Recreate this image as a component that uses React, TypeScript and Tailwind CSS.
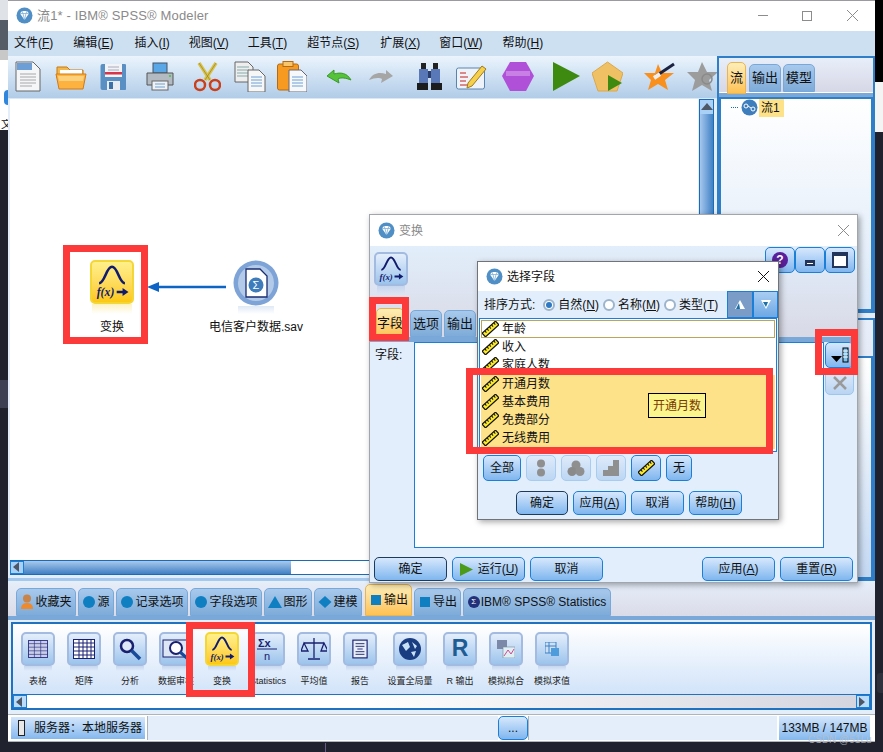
import type { ReactNode } from "react";

function Logo({ size = 17 }: { size?: number }) {
  return (
    <svg width={size} height={size} viewBox="0 0 17 17" className="shrink-0">
      <circle cx="8.5" cy="8.5" r="8" fill="#4f8fc6" />
      <path d="M4 6.5 6 4h5l2 2.5L8.5 13z" fill="#fff" />
      <path d="M4 6.5h9M6 4l1 2.5 1.500 6.500L10 6.500 11 4" stroke="#7fb0d8" strokeWidth=".8" fill="none" />
    </svg>
  );
}

function Fx({ size = 34 }: { size?: number }) {
  return (
    <svg width={size} height={size} viewBox="0 0 34 34">
      <path d="M6 18c5 0 6-14 11-14s6 14 11 14" fill="none" stroke="#101a6e" strokeWidth="2.200" />
      <text x="4" y="29" fontSize="10" fontWeight="700" fontStyle="italic" fontFamily="Liberation Serif, serif" fill="#101a6e">
        f(x)
      </text>
      <path d="M21 25.500h7" stroke="#101a6e" strokeWidth="2" />
      <path d="M26 22l5 3.500-5 3.500z" fill="#101a6e" />
    </svg>
  );
}

function Ruler() {
  return (
    <svg width="17" height="16" viewBox="0 0 17 16" className="shrink-0">
      <g transform="rotate(-42 8.500 8)">
        <rect x="-0.500" y="5.500" width="18" height="5" fill="#fbe92a" stroke="#111" strokeWidth="1.200" />
        <path d="M3 6v2M6 6v2M9 6v2M12 6v2M15 6v2" stroke="#111" />
      </g>
    </svg>
  );
}

function Radio({ on }: { on?: boolean }) {
  return (
    <span className="flex h-[12px] w-[12px] shrink-0 items-center justify-center rounded-full border-2 border-[#9db4cc] bg-white">
      {on && <span className="h-[6px] w-[6px] rounded-full bg-[#2d79c4]" />}
    </span>
  );
}

function Btn({ className, children, dark }: { className: string; children: ReactNode; dark?: boolean }) {
  return (
    <div
      className={`flex items-center justify-center rounded-[5px] border bg-linear-to-b from-[#d6e8fc] to-[#7fb6ee] text-[12px] text-[#111] ${
        dark ? "border-[#1d3b5c]" : "border-[#1b7fd8]"
      } ${className}`}
    >
      {children}
    </div>
  );
}

function Tab({ className, active, children }: { className: string; active?: boolean; children: ReactNode }) {
  return (
    <div
      className={`flex items-center justify-center rounded-t-[5px] border text-[#111] ${
        active
          ? "border-[#e8b552] bg-linear-to-b from-[#fdeeb8] to-[#fdc252]"
          : "border-[#78a8d8] bg-linear-to-b from-[#a8c9ec] to-[#7eabd9]"
      } ${className}`}
    >
      {children}
    </div>
  );
}

function Dot({ kind = "circle" }: { kind?: "circle" | "tri" | "pent" | "square" }) {
  return (
    <svg width="14" height="14" viewBox="0 0 14 14" className="shrink-0">
      {kind === "circle" && <circle cx="7" cy="7" r="6" fill="#0f7fc2" />}
      {kind === "tri" && <path d="M7 1l7 12H0z" fill="#0f7fc2" />}
      {kind === "pent" && <path d="M7 1l6.500 6L7 13 .5 7z" fill="#0f7fc2" />}
      {kind === "square" && <rect x="2" y="2" width="10" height="10" fill="#0f7fc2" />}
    </svg>
  );
}

const tools: { ml: string; w: number; node: ReactNode }[] = [
  {
    ml: "ml-[7px]",
    w: 26,
    node: (
      <>
        <path d="M1 1h17l7 7v22H1z" fill="#f4f6f8" stroke="#666" />
        <rect x="2" y="2" width="15" height="7" fill="#6d9fd6" />
        <path d="M5 13h16M5 16h16M5 19h16M5 22h16M5 25h12" stroke="#a8a8a8" />
      </>
    ),
  },
  {
    ml: "ml-[14px]",
    w: 32,
    node: (
      <>
        <path d="M2 6h10l3 3h13v8H2z" fill="#f4b74a" stroke="#c67a18" />
        <path d="M5 9h22v6H5z" fill="#fff" />
        <path d="M1 13h30l-3 15H4z" fill="#fdb23f" stroke="#d07a18" />
        <path d="M3 15h26l-1 5H4z" fill="#fdd07c" />
      </>
    ),
  },
  {
    ml: "ml-[13px]",
    w: 26,
    node: (
      <>
        <rect x="0.500" y="3" width="26" height="26" rx="2" fill="#5a8fc4" />
        <rect x="5" y="3" width="17" height="13" fill="#f1f3f6" />
        <rect x="5" y="11" width="17" height="2.500" fill="#d8344a" />
        <path d="M8 6h11M8 9h11" stroke="#aab" />
        <rect x="7" y="20" width="13" height="9" fill="#e8ecf2" />
        <rect x="9" y="21" width="4" height="7" fill="#3c70a8" />
      </>
    ),
  },
  {
    ml: "ml-[20px]",
    w: 28,
    node: (
      <>
        <rect x="7" y="2" width="14" height="10" fill="#5aa7e8" stroke="#456" />
        <path d="M1 12h26v12H1z" fill="#b4bac2" stroke="#555" />
        <rect x="6" y="20" width="16" height="9" fill="#eef2f6" stroke="#666" />
        <path d="M9 23h10M9 26h10" stroke="#6fa0d0" />
        <circle cx="24" cy="15" r="1" fill="#3c3" />
      </>
    ),
  },
  {
    ml: "ml-[20px]",
    w: 27,
    node: (
      <>
        <path d="M5 2l11 17M22 2L11 19" stroke="#d9c24a" strokeWidth="3.500" />
        <path d="M5 2l11 17M22 2L11 19" stroke="#8a7a20" strokeWidth=".6" />
        <ellipse cx="6" cy="24" rx="5" ry="5" fill="none" stroke="#c9401c" strokeWidth="2.500" />
        <ellipse cx="21" cy="24" rx="5" ry="5" fill="none" stroke="#c9401c" strokeWidth="2.500" />
      </>
    ),
  },
  {
    ml: "ml-[13px]",
    w: 32,
    node: (
      <>
        <path d="M1 1h13l5 5v15H1z" fill="#eee" stroke="#666" />
        <path d="M3 6h12M3 9h12M3 12h12M3 15h12" stroke="#8aa" />
        <path d="M14 9h11l6 6v16H14z" fill="#f7f7f7" stroke="#666" />
        <path d="M17 16h11M17 19h11M17 22h11M17 25h11" stroke="#6d9fd6" />
      </>
    ),
  },
  {
    ml: "ml-[11px]",
    w: 30,
    node: (
      <>
        <rect x="0.500" y="3" width="21" height="26" rx="2" fill="#f69a22" stroke="#b86a10" />
        <rect x="6" y="0.500" width="10" height="5" fill="#f8c46c" stroke="#b86a10" />
        <path d="M12 9h12l6 6v16H12z" fill="#f7f8fa" stroke="#667" />
        <path d="M15 16h11M15 19h11M15 22h11M15 25h11" stroke="#6d9fd6" />
      </>
    ),
  },
  {
    ml: "ml-[19px]",
    w: 26,
    node: <path d="M1 12l7-6v4c7-2 13-1 17 6-5-2-10-3-13-1l1 4z" fill="#55c23a" stroke="#3a9a28" transform="translate(0 3)" />,
  },
  {
    ml: "ml-[16px]",
    w: 26,
    node: <path d="M25 12l-7-6v4C11 8 5 9 1 16c5-2 10-3 13-1l-1 4z" fill="#a6a6a6" transform="translate(0 3)" />,
  },
  {
    ml: "ml-[22px]",
    w: 27,
    node: (
      <>
        <rect x="5" y="2" width="5" height="6" fill="#222" />
        <rect x="17" y="2" width="5" height="6" fill="#222" />
        <path d="M3 8h9v14H3zM15 8h9v14h-9z" fill="#5878b8" />
        <rect x="12" y="10" width="3" height="7" fill="#2a3c6a" />
        <rect x="1" y="22" width="11" height="7" fill="#1c1c1c" />
        <rect x="15" y="22" width="11" height="7" fill="#1c1c1c" />
      </>
    ),
  },
  {
    ml: "ml-[13px]",
    w: 31,
    node: (
      <>
        <rect x="0.500" y="7" width="28" height="21" rx="2" fill="#eef3f9" stroke="#5a84b0" />
        <path d="M4 12h6M4 16h8M4 20h6M4 24h8" stroke="#c81e1e" />
        <path d="M12 22L26 5l4 3-14 17-5 2z" fill="#f6d04a" stroke="#a07a1c" />
      </>
    ),
  },
  {
    ml: "ml-[15px]",
    w: 32,
    node: (
      <>
        <path d="M8 1h16l8 14-8 15H8L0 15z" fill="#b050d8" />
        <rect x="4" y="10" width="24" height="5" fill="#c880e4" />
      </>
    ),
  },
  { ml: "ml-[18px]", w: 28, node: <path d="M1 1l27 14L1 30z" fill="#3e8a10" /> },
  {
    ml: "ml-[12px]",
    w: 31,
    node: (
      <>
        <path d="M15.500 1L31 12l-6 18H6L0 12z" fill="#efc064" stroke="#dca848" />
        <path d="M16 14l14 8-14 8z" fill="#3e8a10" />
      </>
    ),
  },
  {
    ml: "ml-[21px]",
    w: 31,
    node: (
      <>
        <path d="M14 3l4 9h12l-9 7 3 10-10-6-10 6 3-10-7-7h11z" fill="#f98f1c" />
        <path d="M12 15L30 3" stroke="#1c2340" strokeWidth="3" />
        <path d="M10 17l6-4" stroke="#eee" strokeWidth="4" />
      </>
    ),
  },
  {
    ml: "ml-[12px]",
    w: 31,
    node: (
      <>
        <path d="M15 1l5 10h11l-9 8 3 11-10-6-10 6 3-11-8-8h11z" fill="#9c9c9c" />
        <circle cx="20" cy="18" r="5" fill="none" stroke="#8a8a8a" strokeWidth="1.500" />
      </>
    ),
  },
];

const menus = [
  ["文件", "F", "ml-[6px]"],
  ["编辑", "E", "ml-[20px]"],
  ["插入", "I", "ml-[21px]"],
  ["视图", "V", "ml-[19px]"],
  ["工具", "T", "ml-[19px]"],
  ["超节点", "S", "ml-[20px]"],
  ["扩展", "X", "ml-[21px]"],
  ["窗口", "W", "ml-[19px]"],
  ["帮助", "H", "ml-[20px]"],
];

const paletteTabs = [
  {
    label: "收藏夹",
    w: "w-[60px] ml-[8px]",
    icon: (
      <svg width="14" height="15" viewBox="0 0 14 15" className="shrink-0">
        <circle cx="7" cy="4.500" r="4" fill="#c9844a" />
        <path d="M1 15c0-5 3-6 6-6s6 1 6 6z" fill="#ee8a2c" />
      </svg>
    ),
  },
  { label: "源", w: "w-[36px] ml-[2px]", icon: <Dot /> },
  { label: "记录选项", w: "w-[72px] ml-[2px]", icon: <Dot /> },
  { label: "字段选项", w: "w-[72px] ml-[2px]", icon: <Dot /> },
  { label: "图形", w: "w-[48px] ml-[2px]", icon: <Dot kind="tri" /> },
  { label: "建模", w: "w-[48px] ml-[2px]", icon: <Dot kind="pent" /> },
  { label: "输出", w: "w-[47px] ml-[3px] h-[32px]", icon: <Dot kind="square" />, active: true },
  { label: "导出", w: "w-[47px] ml-[2px]", icon: <Dot kind="square" /> },
  {
    label: "IBM® SPSS® Statistics",
    w: "w-[148px] ml-[2px]",
    icon: <span className="flex h-[12px] w-[12px] items-center justify-center rounded-full bg-[#23307a] text-[8px] text-white">Σ</span>,
  },
];

function Tile({ yellow, size = "h-[34px] w-[34px]", children }: { yellow?: boolean; size?: string; children: ReactNode }) {
  return (
    <div
      className={`flex items-center justify-center overflow-hidden rounded-[5px] border-2 ${size} ${
        yellow
          ? "border-[#f5d637] bg-linear-to-b from-[#fff08a] to-[#fdc80a]"
          : "border-[#a3bbe0] bg-linear-to-b from-[#e4eefb] to-[#9cc4ec]"
      }`}
    >
      {children}
    </div>
  );
}

const palette: { label: string; cell?: string; yellow?: boolean; node: ReactNode }[] = [
  {
    label: "表格",
    node: (
      <svg width="20" height="18" viewBox="0 0 22 20">
        <rect x=".5" y=".5" width="21" height="19" fill="#c8cde8" stroke="#2a2f80" />
        <path d="M0 4h22M0 8h22M0 12h22M0 16h22M7 0v20M14 0v20" stroke="#2a2f80" strokeWidth=".7" />
      </svg>
    ),
  },
  {
    label: "矩阵",
    node: (
      <svg width="22" height="20" viewBox="0 0 22 20">
        <rect x=".5" y=".5" width="21" height="19" fill="#fff" stroke="#1a2070" />
        <path d="M0 4h22M0 8h22M0 12h22M0 16h22M6 0v20M10 0v20M14 0v20M18 0v20" stroke="#1a2070" />
      </svg>
    ),
  },
  {
    label: "分析",
    node: (
      <svg width="24" height="24" viewBox="0 0 24 24">
        <circle cx="9" cy="9" r="6" fill="#dfe8f6" stroke="#1a2070" strokeWidth="2.500" />
        <path d="M13.500 13.500L22 22" stroke="#1a4a9a" strokeWidth="3.500" />
      </svg>
    ),
  },
  {
    label: "数据审核",
    node: (
      <svg width="28" height="24" viewBox="0 0 28 24">
        <rect x="1" y="3" width="24" height="17" fill="#dde6f4" stroke="#1a2070" />
        <circle cx="14" cy="11" r="6" fill="#fff" stroke="#1a2070" strokeWidth="2" />
        <path d="M18 15l8 7" stroke="#1a4a9a" strokeWidth="3" />
      </svg>
    ),
  },
  { label: "变换", yellow: true, node: <Fx size={32} /> },
  {
    label: "Statistics",
    node: (
      <svg width="28" height="26" viewBox="0 0 28 26">
        <text x="4" y="11" fontSize="11" fontWeight="700" fill="#1a2070" fontFamily="Liberation Sans, sans-serif">Σx</text>
        <path d="M3 13h20" stroke="#1a2070" />
        <text x="10" y="24" fontSize="11" fill="#1a2070" fontFamily="Liberation Sans, sans-serif">n</text>
      </svg>
    ),
  },
  {
    label: "平均值",
    node: (
      <svg width="26" height="24" viewBox="0 0 26 24">
        <path d="M13 1v20M7 22h12M3 6h20M3 6l-3 8h7zM23 6l-3 8h7z" fill="none" stroke="#1a2070" strokeWidth="1.300" />
      </svg>
    ),
  },
  {
    label: "报告",
    node: (
      <svg width="16" height="20" viewBox="0 0 18 22">
        <rect x="1" y="1" width="16" height="20" fill="#e8eef8" stroke="#1a2070" strokeWidth="1.300" />
        <path d="M4 5h10M4 8h10M6 11h6M4 14h10M4 17h10" stroke="#1a2070" />
      </svg>
    ),
  },
  {
    label: "设置全局量",
    cell: "w-[54px]",
    node: (
      <svg width="24" height="24" viewBox="0 0 24 24">
        <circle cx="12" cy="12" r="11" fill="#1a3c80" />
        <path d="M4 8l6-3 2 5-4 4zM14 5l5 4-2 3zM13 15l5-1-2 6z" fill="#c8e0f4" />
      </svg>
    ),
  },
  {
    label: "R 输出",
    node: <span className="text-[23px] leading-none font-bold text-[#1f5c94]">R</span>,
  },
  {
    label: "模拟拟合",
    node: (
      <svg width="18" height="18" viewBox="0 0 18 18">
        <rect x="0" y="0" width="10" height="9" fill="#7c88a8" />
        <rect x="6" y="7" width="12" height="11" fill="#dff0f4" stroke="#789" strokeWidth=".6" />
        <path d="M7 16l4-6 3 4 3-5" stroke="#d04890" fill="none" />
      </svg>
    ),
  },
  {
    label: "模拟求值",
    node: (
      <svg width="14" height="14" viewBox="0 0 14 14">
        <rect x="0" y="0" width="11" height="11" fill="#cfe0f4" stroke="#3a80c8" />
        <path d="M0 4h11M4 0v11" stroke="#3a80c8" />
        <rect x="6" y="6" width="8" height="8" fill="#4f9cdc" />
      </svg>
    ),
  },
];

function RedBox({ className }: { className: string }) {
  return <div className={`absolute border-[7px] border-[#fd3a3a] ${className}`} />;
}

function Arrow({ dir, className }: { dir: "l" | "r" | "u"; className?: string }) {
  const d = dir === "l" ? "M8 1v10L2 6z" : dir === "r" ? "M2 1v10l6-5z" : "M6 2l6 7H0z";
  return (
    <svg width="12" height="12" viewBox="0 0 12 12" className={className}>
      <path d={d} fill="#4d5766" />
    </svg>
  );
}

export default function App() {
  return (
    <div className="relative h-[752px] w-[883px] overflow-hidden bg-[#20222e] font-['Liberation_Sans','Noto_Sans_CJK_SC',sans-serif] text-[#111]">
      {/* desktop behind the window */}
      <div className="absolute top-0 left-0 h-[130px] w-[8px] bg-white">
        <div className="h-[20px] bg-[#dfe3e8]" />
        <div className="h-[30px] bg-[#555c66]" />
        <div className="h-[10px] bg-[#c8c8c8]" />
        <div className="mt-[30px] ml-[4px] h-[15px] w-[4px] rounded-l-full bg-[#2f86dc]" />
        <div className="mt-[14px] ml-[1px] h-[11px] w-[7px] overflow-hidden text-[11px] leading-[11px]">文</div>
      </div>
      <div className="absolute top-[380px] left-0 h-[28px] w-[8px] bg-[#3d3f52]" />
      <div className="absolute top-0 right-0 h-[82px] w-[8px] bg-black" />
      <div className="absolute top-[82px] right-0 h-[50px] w-[8px] bg-[#f4f4f4]" />
      <div className="absolute top-[673px] right-0 h-[20px] w-[6px] rounded-l-[3px] bg-[#2e303c]" />
      <div className="absolute top-[743px] left-[325px] h-[9px] w-[1px] bg-[#6a5a8a]" />

      <div className="ml-[8px] flex h-[742px] w-[867px] flex-col bg-[#e4eefa]">
        <div className="flex h-[31px] items-center border-t border-[#9a9aa0] bg-white">
          <span className="ml-[8px]">
            <Logo />
          </span>
          <span className="ml-[4px] text-[13px] tracking-[0.15px] text-[#8a8a8a]">流1* - IBM® SPSS® Modeler</span>
          <div className="ml-auto flex items-center text-[#8c8c8c]">
            <span className="mr-[34px] h-[1px] w-[10px] bg-[#8c8c8c]" />
            <span className="mr-[35px] h-[10px] w-[10px] border border-[#8c8c8c]" />
            <svg width="11" height="11" viewBox="0 0 11 11" className="mr-[17px]">
              <path d="M0 0l11 11M11 0L0 11" stroke="#8c8c8c" />
            </svg>
          </div>
        </div>

        <div className="flex h-[25px] items-center bg-[#cde0f1] text-[12px]">
          {menus.map(([zh, key, ml]) => (
            <span key={zh} className={ml}>
              {zh}(<u>{key}</u>)
            </span>
          ))}
        </div>

        <div className="flex h-[525px]">
          <div className="flex w-[709px] flex-col">
            <div className="flex h-[43px] items-center overflow-hidden border-b border-[#d7e8f8] bg-linear-to-b from-[#ebf4fd] to-[#b1cce8]">
              {tools.map((t, i) => (
                <svg key={i} width={t.w} height="31" viewBox={`0 0 ${t.w} 31`} className={`${t.ml} shrink-0`}>
                  {t.node}
                </svg>
              ))}
            </div>
            <div className="ml-[2px] flex h-[461px]">
              <div className="relative w-[688px] bg-white">
                {/* stream canvas */}
                <div className="absolute top-[161px] left-[80px] flex flex-col items-center">
                  <Tile yellow size="h-[44px] w-[44px]">
                    <Fx size={42} />
                  </Tile>
                  <div className="h-[10px] w-[40px] bg-linear-to-b from-[#fdf2c0] to-white" />
                  <span className="mt-[4px] text-[12px]">变换</span>
                </div>
                <svg width="84" height="16" viewBox="0 0 84 16" className="absolute top-[180px] left-[136px]">
                  <path d="M80 8H10" stroke="#0d64c4" strokeWidth="2.500" />
                  <path d="M1 8l12-5v10z" fill="#0d64c4" />
                </svg>
                <div className="absolute top-[161px] left-[198px] flex w-[96px] flex-col items-center">
                  <svg width="46" height="46" viewBox="0 0 46 46">
                    <circle cx="23" cy="23" r="22.500" fill="#7ea3d6" />
                    <circle cx="23" cy="23" r="18" fill="#b3cbe8" />
                    <path d="M13 9h14l7 7v21H13z" fill="#fff" stroke="#1a2c70" strokeWidth="1.300" />
                    <circle cx="23" cy="25" r="7.500" fill="#3e7cbc" />
                    <text x="19.500" y="29" fontSize="11" fill="#fff" fontFamily="Liberation Sans, sans-serif">Σ</text>
                  </svg>
                  <div className="h-[8px] w-[36px] bg-linear-to-b from-[#dfe9f5] to-white" />
                  <span className="mt-[4px] text-[12px] whitespace-nowrap">电信客户数据.sav</span>
                </div>
              </div>
              <div className="ml-[1px] flex w-[15px] flex-col border border-[#1b6cb5]">
                <div className="flex h-[14px] items-center justify-center bg-[#a9d0f7]">
                  <Arrow dir="u" />
                </div>
                <div className="flex-1 bg-linear-to-r from-[#a5c8ee] to-[#3f80c4]" />
              </div>
            </div>
            <div className="ml-[2px] flex h-[15px] border-y border-[#1b6cb5] bg-white">
              <div className="flex w-[14px] items-center justify-center border border-[#1b7fd8] bg-[#a9d0f7]">
                <Arrow dir="l" />
              </div>
              <div className="w-[267px] bg-linear-to-b from-[#a8c9ec] to-[#3f80c4]" />
            </div>
            <div className="flex h-[6px] items-end">
              <div className="h-[3px] w-full bg-[#a5c9ee]" />
            </div>
          </div>

          <div className="flex w-[158px] flex-col">
            <div className="flex h-[257px] flex-col border-2 border-[#2f7fc8] bg-[#e4eefa]">
              <div className="relative z-10 flex h-[34px] items-start bg-linear-to-b from-[#e8eefa] to-[#d7d7e6] pl-[8px]">
                <Tab active className="mt-[4px] h-[32px] w-[19px] text-[13px]">流</Tab>
                <Tab className="mt-[6px] ml-[3px] h-[28px] w-[32px] text-[13px]">输出</Tab>
                <Tab className="mt-[6px] ml-[2px] h-[28px] w-[32px] text-[13px]">模型</Tab>
              </div>
              <div className="h-[5px] border-t border-white bg-[#7aa8d8]" />
              <div className="flex-1 border-2 border-[#2f7fc8] bg-linear-to-b from-white to-[#dbe8f8]">
                <div className="flex h-[18px] items-center pl-[10px]">
                  <span className="w-[7px] border-t border-dotted border-[#1b6cb5]" />
                  <svg width="17" height="17" viewBox="0 0 17 17" className="ml-[3px]">
                    <circle cx="8.500" cy="8.500" r="8" fill="#3f7ebd" />
                    <circle cx="5" cy="7" r="2" fill="none" stroke="#fff" />
                    <circle cx="12" cy="10" r="2" fill="none" stroke="#fff" />
                    <path d="M7 7l3 2" stroke="#fff" />
                  </svg>
                  <span className="ml-[1px] flex h-[18px] w-[25px] items-center bg-[#fde28a] pl-[2px] text-[12px]">流1</span>
                </div>
              </div>
            </div>
            <div className="mt-[5px] flex h-[263px] flex-col border-2 border-[#2f7fc8] bg-linear-to-b from-[#e8eefa] to-[#d7d7e6]">
              <div className="h-[36px]" />
              <div className="flex-1 border-2 border-[#2f7fc8] bg-linear-to-b from-white to-[#c4d8f2]" />
            </div>
          </div>
        </div>

        <div className="flex h-[39px] flex-col justify-end bg-linear-to-b from-[#e6eefa] to-[#d9d9e6]">
          <div className="flex items-end">
            {paletteTabs.map((t) => (
              <Tab key={t.label} active={t.active} className={`h-[28px] gap-[1px] text-[12px] whitespace-nowrap ${t.w}`}>
                {t.icon}
                <span>{t.label}</span>
              </Tab>
            ))}
          </div>
          <div className="h-[4px] bg-[#7aa8d8]" />
        </div>

        <div className="mt-[2px] ml-[3px] flex h-[89px] w-[861px] flex-col border-2 border-[#1f72c0] bg-linear-to-b from-white to-[#c9def8]">
          <div className="flex flex-1 pt-[8px] pl-[2px]">
            {palette.map((p) => (
              <div key={p.label} className={`flex shrink-0 flex-col items-center ${p.cell ?? "w-[46px]"}`}>
                <Tile yellow={p.yellow}>{p.node}</Tile>
                <div className="h-[5px] w-[28px] bg-linear-to-b from-[#c4d6ee] to-transparent" />
                <span className="mt-[5px] text-[9px] leading-[11px] whitespace-nowrap text-[#222]">{p.label}</span>
              </div>
            ))}
          </div>
          <div className="flex h-[14px] border-t border-[#1f72c0]">
            <div className="flex w-[14px] items-center justify-center border border-[#1b7fd8] bg-[#bcdcfb]">
              <Arrow dir="l" />
            </div>
            <div className="flex-1 bg-linear-to-r from-white from-40% to-[#d5d5e0]" />
            <div className="flex w-[14px] items-center justify-center border border-[#1b7fd8] bg-[#bcdcfb]">
              <Arrow dir="r" />
            </div>
          </div>
        </div>

        <div className="mt-[4px] flex h-[28px] border-y border-[#aeb4bc] bg-white p-[1px] text-[12px]">
          <div className="ml-[2px] flex w-[134px] items-center border-y border-white bg-linear-to-b from-[#d4e6fb] to-[#84b8ee] pl-[7px]">
            <span className="h-[16px] w-[7px] border border-[#222] bg-[#e8e8e8]" />
            <span className="ml-[9px]">服务器：本地服务器</span>
          </div>
          <div className="ml-[2px] w-[351px] border-l border-[#aeb4bc] bg-[#e4eefa]" />
          <Btn className="w-[30px]">...</Btn>
          <div className="w-[249px] border-l border-[#aeb4bc] bg-[#e4eefa]" />
          <div className="ml-[2px] flex w-[91px] items-center justify-center bg-linear-to-b from-[#d4e6fb] to-[#84b8ee]">
            133MB / 147MB
          </div>
        </div>
      </div>

      {/* 变换 dialog */}
      <div className="absolute top-[214px] left-[369px] flex h-[369px] w-[489px] flex-col border border-[#a2a6ac] bg-[#e2eefb] shadow-[2px_2px_6px_rgba(0,0,0,0.35)]">
        <div className="flex h-[31px] items-center bg-white pl-[8px]">
          <Logo />
          <span className="ml-[4px] text-[12px] text-[#8a8a8a]">变换</span>
          <svg width="11" height="11" viewBox="0 0 11 11" className="mr-[8px] ml-auto">
            <path d="M0 0l11 11M11 0L0 11" stroke="#8c8c8c" />
          </svg>
        </div>
        <div className="flex h-[91px] flex-col bg-linear-to-b from-[#e2eefb] to-[#d9d9e6]">
          <div className="flex">
            <div className="mt-[6px] ml-[4px]">
              <Tile>
                <Fx size={32} />
              </Tile>
              <div className="mx-auto h-[8px] w-[28px] bg-linear-to-b from-[#c4d6ee] to-transparent" />
            </div>
            <div className="mt-[1px] mr-[2px] ml-auto flex">
              <Btn className="h-[26px] w-[30px]">
                <span className="flex h-[16px] w-[16px] items-center justify-center rounded-full bg-[#5a1f9a] text-[12px] font-bold text-white">?</span>
              </Btn>
              <Btn className="h-[26px] w-[30px]">
                <span className="mt-[6px] h-[6px] w-[10px] border-2 border-t-3 border-[#23355a] bg-white" />
              </Btn>
              <Btn className="h-[26px] w-[30px]">
                <span className="h-[16px] w-[16px] border-2 border-t-4 border-[#23355a] bg-white" />
              </Btn>
            </div>
          </div>
          <div className="mt-auto flex items-end pl-[6px]">
            <Tab active className="h-[29px] w-[28px] text-[13px]">字段</Tab>
            <Tab className="ml-[6px] h-[27px] w-[32px] text-[13px]">选项</Tab>
            <Tab className="ml-[2px] h-[27px] w-[32px] text-[13px]">输出</Tab>
          </div>
        </div>
        <div className="h-[5px] bg-[#7aa8d8]" />
        <div className="flex flex-1">
          <span className="mt-[4px] ml-[5px] w-[39px] text-[12px]">字段:</span>
          <div className="h-[206px] w-[410px] border border-[#1b7fd8] bg-white" />
          <div className="ml-[1px] flex flex-col gap-[2px]">
            <Btn className="h-[26px] w-[29px]">
              <svg width="20" height="16" viewBox="0 0 20 16">
                <path d="M1 9h11l-5.500 6z" fill="#000" />
                <rect x="13" y="1" width="5" height="14" fill="#7cc0ec" stroke="#000" />
                <path d="M13 4h5M13 7h5M13 10h5" stroke="#fff" />
              </svg>
            </Btn>
            <div className="flex h-[25px] w-[29px] items-center justify-center rounded-[5px] border border-[#9cc6ee] bg-linear-to-b from-[#dfeafa] to-[#b9d4f2]">
              <svg width="14" height="14" viewBox="0 0 14 14">
                <path d="M1 1l12 12M13 1L1 13" stroke="#9a9a9a" strokeWidth="2.500" />
              </svg>
            </div>
          </div>
        </div>
        <div className="mb-[1px] flex px-[4px]">
          <Btn dark className="h-[24px] w-[73px]">确定</Btn>
          <Btn className="ml-[5px] h-[24px] w-[73px] gap-[5px]">
            <svg width="14" height="15" viewBox="0 0 14 15">
              <path d="M1 1l13 6.500L1 14z" fill="#4c9a1a" />
            </svg>
            <span>运行(<u>U</u>)</span>
          </Btn>
          <Btn className="ml-[5px] h-[24px] w-[73px]">取消</Btn>
          <Btn className="ml-auto h-[24px] w-[73px]"><span>应用(<u>A</u>)</span></Btn>
          <Btn className="ml-[5px] h-[24px] w-[73px]"><span>重置(<u>R</u>)</span></Btn>
        </div>
      </div>

      {/* 选择字段 dialog */}
      <div className="absolute top-[261px] left-[477px] flex h-[259px] w-[302px] flex-col border border-[#707478] bg-[#e2eefb] shadow-[2px_2px_6px_rgba(0,0,0,0.35)]">
        <div className="flex h-[29px] items-center bg-white pl-[8px]">
          <Logo />
          <span className="ml-[4px] text-[12px]">选择字段</span>
          <svg width="11" height="11" viewBox="0 0 11 11" className="mr-[9px] ml-auto">
            <path d="M0 0l11 11M11 0L0 11" stroke="#111" />
          </svg>
        </div>
        <div className="flex h-[27px] items-center pl-[6px] text-[12px]">
          <span>排序方式:</span>
          <span className="ml-[8px]"><Radio on /></span>
          <span className="ml-[3px]">自然(<u>N</u>)</span>
          <span className="ml-[4px]"><Radio /></span>
          <span className="ml-[3px]">名称(<u>M</u>)</span>
          <span className="ml-[4px]"><Radio /></span>
          <span className="ml-[3px]">类型(<u>T</u>)</span>
          <div className="ml-auto flex h-[27px]">
            <div className="flex w-[26px] items-center justify-center border border-[#1b7fd8] bg-[#7a9cc6]">
              <svg width="10" height="9" viewBox="0 0 10 9"><path d="M5 0l5 9H0z" fill="#fff" /><path d="M4 3L1 9h4z" fill="#1a70a8" /></svg>
            </div>
            <div className="flex w-[25px] items-center justify-center border border-[#1b7fd8] bg-linear-to-b from-[#a9cdf2] to-[#6ea8e4]">
              <svg width="10" height="9" viewBox="0 0 10 9"><path d="M0 0h10L5 9z" fill="#fff" /><path d="M2 2h5L5 7z" fill="#1a70a8" /></svg>
            </div>
          </div>
        </div>
        <div className="mx-[1px] h-[134px] border border-[#1b7fd8] bg-white p-[1px] text-[12px]">
          <div className="flex h-[18px] items-center gap-[3px] border border-[#bca45a]"><Ruler />年龄</div>
          <div className="flex h-[18px] items-center gap-[3px] pl-[1px]"><Ruler />收入</div>
          <div className="flex h-[18px] items-center gap-[3px] pl-[1px]"><Ruler />家庭人数</div>
          <div className="mt-[1px] bg-[#fde28a] pb-[2px]">
            {["开通月数", "基本费用", "免费部分", "无线费用"].map((f) => (
              <div key={f} className="flex h-[18px] items-center gap-[3px] pl-[1px]"><Ruler />{f}</div>
            ))}
          </div>
        </div>
        <div className="mt-[3px] flex h-[26px] pl-[5px] text-[12px]">
          <Btn className="w-[38px]">全部</Btn>
          <div className="ml-[5px] flex w-[30px] items-center justify-center rounded-[5px] border border-[#a8ccf0] bg-linear-to-b from-[#dfeafa] to-[#bcd6f3]">
            <svg width="10" height="18" viewBox="0 0 10 18"><circle cx="5" cy="4.500" r="4" fill="#8f8f8f" /><circle cx="5" cy="13.500" r="4" fill="#8f8f8f" /></svg>
          </div>
          <div className="ml-[5px] flex w-[30px] items-center justify-center rounded-[5px] border border-[#a8ccf0] bg-linear-to-b from-[#dfeafa] to-[#bcd6f3]">
            <svg width="18" height="16" viewBox="0 0 18 16"><circle cx="9" cy="5" r="4.500" fill="#8f8f8f" /><circle cx="5" cy="11.500" r="4.500" fill="#8a8a8a" /><circle cx="13" cy="11.500" r="4.500" fill="#8f8f8f" /></svg>
          </div>
          <div className="ml-[5px] flex w-[30px] items-center justify-center rounded-[5px] border border-[#a8ccf0] bg-linear-to-b from-[#dfeafa] to-[#bcd6f3]">
            <svg width="16" height="16" viewBox="0 0 16 16"><path d="M0 10h5V6h5V0h6v16H0z" fill="#8f8f8f" /></svg>
          </div>
          <Btn className="ml-[5px] w-[30px]"><Ruler /></Btn>
          <Btn className="ml-[5px] w-[26px]">无</Btn>
        </div>
        <div className="mt-[10px] flex pl-[38px]">
          <Btn dark className="h-[24px] w-[52px]">确定</Btn>
          <Btn className="ml-[5px] h-[24px] w-[53px]"><span>应用(<u>A</u>)</span></Btn>
          <Btn className="ml-[5px] h-[24px] w-[53px]">取消</Btn>
          <Btn className="ml-[5px] h-[24px] w-[53px]"><span>帮助(<u>H</u>)</span></Btn>
        </div>
      </div>

      <div className="absolute top-[393px] left-[648px] flex h-[25px] w-[58px] items-center justify-center border border-black bg-[#fbf58e] text-[12px] text-[#7a3a00]">
        开通月数
      </div>

      <RedBox className="top-[245px] left-[63px] h-[99px] w-[85px]" />
      <RedBox className="top-[297px] left-[369px] h-[44px] w-[40px]" />
      <RedBox className="top-[329px] left-[815px] h-[46px] w-[43px]" />
      <RedBox className="top-[368px] left-[466px] h-[86px] w-[307px]" />
      <RedBox className="top-[622px] left-[186px] h-[75px] w-[69px]" />

      <span className="absolute top-[732px] left-[808px] text-[10px] text-[#b9bec6] opacity-80">CSDN @51Lu</span>
    </div>
  );
}
